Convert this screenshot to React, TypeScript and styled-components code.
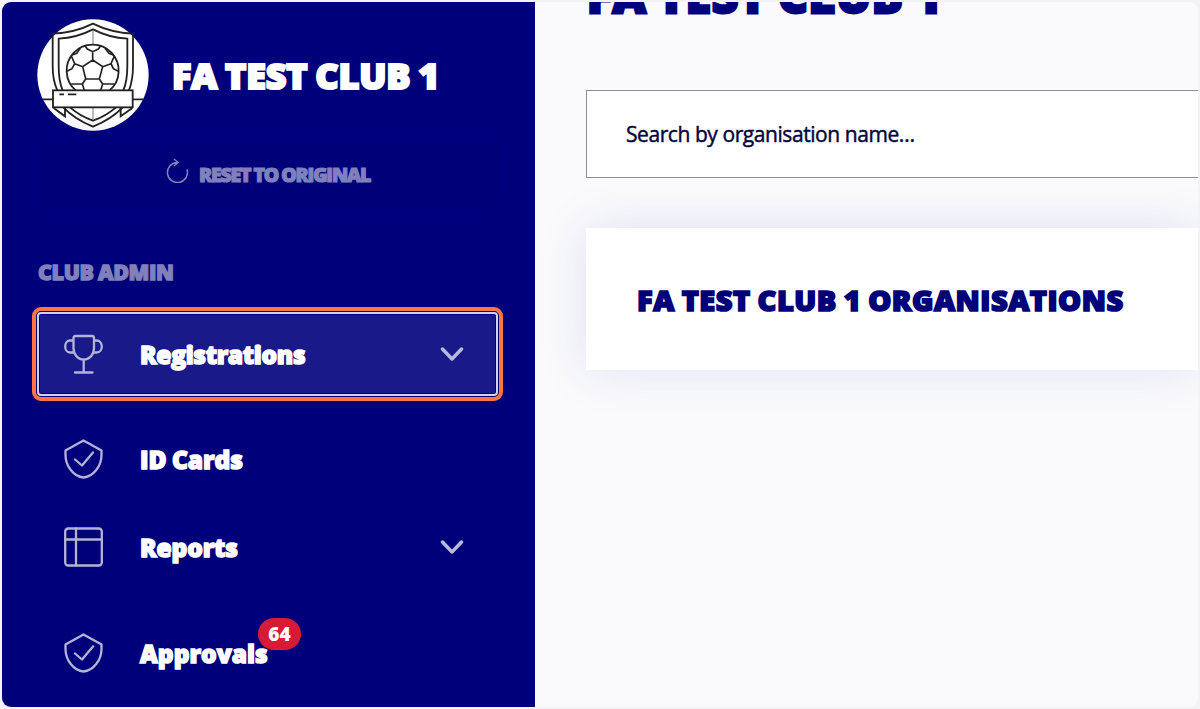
import React from "react";
import styled, { createGlobalStyle } from "styled-components";

const navy = "#00007b";

const GlobalStyle = createGlobalStyle`
  *, *::before, *::after { box-sizing: border-box; }
  body { margin: 0; background: #f3f3f6; }
`;

const Frame = styled.div`
  width: 1200px;
  height: 709px;
  padding: 2px;
  background: #f3f3f6;
  font-family: "Open Sans", "Noto Sans", sans-serif;
`;

const Shell = styled.div`
  display: flex;
  width: 1196px;
  height: 705px;
  border-radius: 9px;
  overflow: hidden;
  background: #fafafc;
`;

const Sidebar = styled.aside`
  flex: 0 0 533px;
  height: 705px;
  padding: 17px 37px 0 35px;
  background: ${navy};
  display: flex;
  flex-direction: column;
`;

const Label = styled.span<{ $size: number; $spacing: number; $dy?: number }>`
  display: block;
  font-size: ${(p) => p.$size}px;
  letter-spacing: ${(p) => p.$spacing}px;
  word-spacing: -0.04em;
  line-height: 1.2;
  font-weight: 800;
  -webkit-text-stroke: 0.06em currentColor;
  white-space: nowrap;
  padding-top: ${(p) => p.$dy ?? 0}px;
`;

const ClubHeader = styled.header`
  display: flex;
  align-items: center;
  gap: 23px;
  height: 112px;
  color: #fff;
`;

const Crest = styled.svg`
  flex: none;
  width: 112px;
  height: 112px;
`;

const ResetButton = styled.button`
  display: flex;
  align-items: center;
  gap: 10px;
  height: 64px;
  margin: 12px 0 0 1px;
  padding: 0 0 0 128px;
  border: 0;
  background: #000078;
  box-shadow: 0 0 30px rgba(0, 0, 160, 0.25);
  font-family: inherit;
  color: #8080bd;
  text-align: left;
`;

const ResetIcon = styled.svg`
  flex: none;
  width: 23px;
  height: 26px;
  margin-bottom: 10px;
  fill: none;
  stroke: #8080bd;
  stroke-width: 1.5;
`;

const SectionTitle = styled.div`
  margin: 52px 0 0 1px;
  height: 27px;
  color: #8080bd;
`;

const Nav = styled.nav`
  display: flex;
  flex-direction: column;
  margin-top: 26px;
`;

const NavItem = styled.a<{ $active?: boolean; $gap?: number }>`
  display: flex;
  align-items: center;
  height: 84px;
  margin-top: ${(p) => p.$gap ?? 0}px;
  padding: 0 32px 0 25px;
  border: 2px solid ${(p) => (p.$active ? "#ccd3e8" : "transparent")};
  border-radius: 4px;
  background: ${(p) => (p.$active ? "#191989" : "transparent")};
  box-shadow: ${(p) => (p.$active ? `inset 0 0 0 1px ${navy}` : "none")};
  outline: ${(p) => (p.$active ? "4px solid #ff7442" : "none")};
  outline-offset: 1px;
  color: #fff;
`;

const NavIcon = styled.svg`
  flex: none;
  width: 39px;
  height: 40px;
  margin-right: 37px;
  fill: none;
  stroke: #b3b3d8;
  stroke-width: 2.3;
  stroke-linejoin: round;
  stroke-linecap: round;
`;

const Chevron = styled.svg`
  width: 24px;
  height: 14px;
  margin-left: auto;
  fill: none;
  stroke: #b9b9dc;
  stroke-width: 3.4;
  stroke-linecap: round;
  stroke-linejoin: round;
`;

const Badged = styled.div`
  position: relative;
`;

const Badge = styled.span`
  position: absolute;
  left: 118px;
  top: -19px;
  width: 43px;
  height: 32px;
  border-radius: 16px;
  background: #d71a36;
  display: flex;
  align-items: center;
  justify-content: center;
`;

const BadgeCount = styled.span`
  font-size: 19px;
  line-height: 1.2;
  font-weight: 800;
`;

const Main = styled.main`
  flex: 1;
  min-width: 0;
  height: 705px;
  padding-left: 51px;
  display: flex;
  flex-direction: column;
  color: ${navy};
`;

const PageTitle = styled.h1`
  margin: -34px 0 0;
  height: 121px;
  padding-left: 1px;
`;

const SearchField = styled.div`
  flex: none;
  display: flex;
  align-items: center;
  height: 88px;
  margin-top: 1px;
  padding-left: 39px;
  border: 1.5px solid #8c8d9e;
  border-right: 0;
  background: #fff;
`;

const SearchText = styled.span`
  font-size: 21px;
  line-height: 28px;
  letter-spacing: -0.43px;
  color: #04043c;
  -webkit-text-stroke: 0.45px currentColor;
  white-space: nowrap;
`;

const Card = styled.section`
  flex: none;
  display: flex;
  align-items: center;
  height: 142px;
  margin-top: 50px;
  padding-left: 51px;
  background: #fff;
  box-shadow: 0 0 50px rgba(30, 50, 170, 0.12);
`;

const TrophyIcon = () => (
  <NavIcon viewBox="0 0 39 40">
    <path d="M9.5 4Q9.5 2 11.500 2H28Q30 2 30 4V14C30 20 26 25.500 19.700 25.500S9.500 20 9.500 14ZM9.500 6.500H6C3 6.500 1.200 9.500 1.200 12.500S3 18.500 6 18.500H9.500M30 6.500H32.500C36 6.500 37.800 9.500 37.800 12.500S36 18.500 32.500 18.500H30M19.700 25.500V38.500M11 38.500H28.500" />
  </NavIcon>
);

const ShieldIcon = () => (
  <NavIcon viewBox="0 0 39 40">
    <path d="M19.500 1.500L37.500 11.500V16C37.500 27 29.500 37.500 19.500 38.500C9.500 37.500 1.500 27 1.500 16V11.500Z" />
    <path d="M11 20.500L18 26.500L29 13.500" />
  </NavIcon>
);

const TableIcon = () => (
  <NavIcon viewBox="0 0 39 40">
    <rect x="1.200" y="1.500" width="36.600" height="37" rx="3" />
    <path d="M1 12.500H38M12 1.500V38.500" />
  </NavIcon>
);

const ChevronDown = () => (
  <Chevron viewBox="0 0 24 14">
    <path d="M2.500 2L12 12L21.500 2" />
  </Chevron>
);

const ClubCrest = () => (
  <Crest viewBox="111 57 336 336" fill="none" stroke="#222" strokeWidth="5.500">
    <circle cx="279" cy="225" r="167" fill="#fff" stroke="none" />
    <path d="M172 271C162 250 158 228 158 198V101C205 99 245 88 279 71C313 88 353 99 399 101V198C399 228 395 250 387 271M188 271C179 250 176 228 176 198V116C215 114 248 104 279 88C310 104 343 114 382 116V198C382 228 379 250 370 271" />
    <path d="M190 322C212 345 245 366 279 380C313 366 346 345 368 322M210 322C231 340 253 353 279 362C305 353 327 340 348 322" />
    <path d="M279 90V132M279 322V360" stroke="#777" strokeWidth="3" />
    <path d="M227 271A78 78 0 1 1 329 271" />
    <path
      d="M278 180L308 200L298 237H257L248 200ZM278 180V155M254 136L262 147L278 155L295 147L303 136M308 200L333 191M343 168L333 191L340 206L355 214M248 200L224 191M214 168L224 191L216 206L201 214M257 237L247 252M298 237L308 252M214 252H247L253 271M342 252H308L302 271M217 165L230 160L241 145M340 165L327 160L315 145"
      strokeWidth="5"
    />
    <rect x="159" y="271" width="239" height="51" fill="#fff" />
    <path d="M178 283H192M204 283H229" />
    <path d="M128 298H159M399 298H430M161 324L195 349V324M397 324L362 349V324" />
  </Crest>
);

export default function App() {
  return (
    <>
      <GlobalStyle />
      <Frame>
        <Shell>
          <Sidebar>
            <ClubHeader>
              <ClubCrest />
              <Label $size={36} $spacing={-0.15} $dy={2}>FA TEST CLUB 1</Label>
            </ClubHeader>
            <ResetButton>
              <ResetIcon viewBox="0 0 23 26">
                <path d="M21 12.500A10 10 0 1 1 11 5.500M8 2L12 5.500L8 9" />
              </ResetIcon>
              <Label $size={19.5} $spacing={-1.2}>RESET TO ORIGINAL</Label>
            </ResetButton>
            <SectionTitle>
              <Label $size={21.5} $spacing={-0.4}>CLUB ADMIN</Label>
            </SectionTitle>
            <Nav>
              <NavItem $active>
                <TrophyIcon />
                <Label $size={24.5} $spacing={-0.3} $dy={2}>Registrations</Label>
                <ChevronDown />
              </NavItem>
              <NavItem $gap={21}>
                <ShieldIcon />
                <Label $size={24.5} $spacing={0} $dy={2}>ID Cards</Label>
              </NavItem>
              <NavItem $gap={4}>
                <TableIcon />
                <Label $size={24.5} $spacing={-0.1} $dy={2}>Reports</Label>
                <ChevronDown />
              </NavItem>
              <NavItem $gap={22}>
                <ShieldIcon />
                <Badged>
                  <Label $size={24.5} $spacing={0.05} $dy={2}>Approvals</Label>
                  <Badge>
                    <BadgeCount>64</BadgeCount>
                  </Badge>
                </Badged>
              </NavItem>
            </Nav>
          </Sidebar>
          <Main>
            <PageTitle>
              <Label $size={46} $spacing={0.8}>FA TEST CLUB 1</Label>
            </PageTitle>
            <SearchField>
              <SearchText>Search by organisation name…</SearchText>
            </SearchField>
            <Card>
              <Label $size={29} $spacing={0.53} $dy={3}>FA TEST CLUB 1 ORGANISATIONS</Label>
            </Card>
          </Main>
        </Shell>
      </Frame>
    </>
  );
}
